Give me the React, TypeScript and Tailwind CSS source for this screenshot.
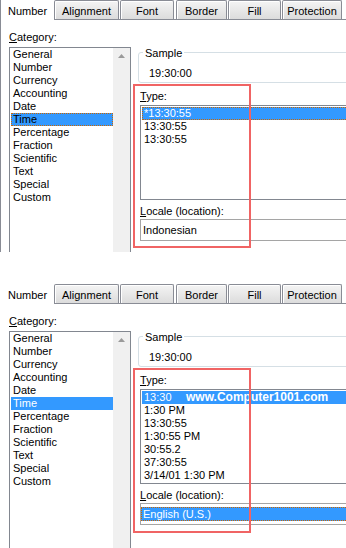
import React from 'react';

const tabs = [
  { label: 'Alignment', cls: 'w-[65px]' },
  { label: 'Font', cls: 'w-[54px] ml-[1px]' },
  { label: 'Border', cls: 'w-[51px] ml-[2px]' },
  { label: 'Fill', cls: 'w-[53px] ml-[1px]' },
  { label: 'Protection', cls: 'w-[60px] ml-[1px]' },
];

const categories = [
  'General',
  'Number',
  'Currency',
  'Accounting',
  'Date',
  'Time',
  'Percentage',
  'Fraction',
  'Scientific',
  'Text',
  'Special',
  'Custom',
];

function Tabs() {
  return (
    <div className="flex h-[20px] shrink-0">
      <div className="w-[54px] shrink-0 pl-[8px] pt-[5px] leading-[13px]">Number</div>
      <div className="flex flex-1 border-b border-[#898c95]">
        {tabs.map((t) => (
          <div
            key={t.label}
            className={`${t.cls} shrink-0 h-[19px] border-t border-x border-[#898c95] rounded-t-[2px] bg-gradient-to-b from-[#f4f4f4] to-[#dcdcdc] shadow-[inset_1px_1px_0_#ffffff] pt-[4px] leading-[13px] text-center`}
          >
            {t.label}
          </div>
        ))}
      </div>
    </div>
  );
}

function UpArrow() {
  return (
    <svg width="7" height="4" viewBox="0 0 7 4">
      <polygon points="0,4 3.5,0 7,4" fill="#9a9a9a" />
    </svg>
  );
}

function Panel({ bottom }: { bottom?: boolean }) {
  const typeItems = bottom
    ? ['13:30', '1:30 PM', '13:30:55', '1:30:55 PM', '30:55.2', '37:30:55', '3/14/01 1:30 PM']
    : ['*13:30:55', '13:30:55', '13:30:55'];
  return (
    <div
      className={`relative flex flex-col overflow-hidden shrink-0 ${
        bottom ? 'h-[264px] mt-[32px]' : 'h-[252px] shadow-[inset_1px_0_0_#898c95]'
      }`}
    >
      <Tabs />
      <div className="flex flex-1 min-h-0">
        {/* Category column */}
        <div className="w-[131px] shrink-0 pl-[9px] flex flex-col">
          <div className="mt-[11px] h-[13px] leading-[13px]">
            <span className="underline underline-offset-[1px]">C</span>ategory:
          </div>
          <div className="mt-[3px] w-[122px] h-[320px] shrink-0 border border-[#828790] flex">
            <div className="w-[103px] pl-[1px]">
              {categories.map((c) => (
                <div
                  key={c}
                  className={`h-[13px] leading-[13px] pl-[2px] whitespace-nowrap ${
                    c === 'Time'
                      ? bottom
                        ? 'bg-[#3399ff] text-white'
                        : 'bg-[#3399ff] outline-1 outline-dotted -outline-offset-1 outline-[#cc6600]'
                      : ''
                  }`}
                >
                  {c}
                </div>
              ))}
            </div>
            <div className="w-[17px] bg-[#f0f0f0] flex justify-center pt-[6px]">
              <div className="h-[4px] flex">
                <UpArrow />
              </div>
            </div>
          </div>
        </div>

        {/* Right column */}
        <div className="w-[230px] shrink-0 pl-[7px] flex flex-col">
          <div className="relative mt-[32px] h-[31px] shrink-0 border border-[#d5dfe5] rounded-[3px]">
            <span className="absolute left-[4px] top-[-6px] bg-white px-[2px] leading-[13px]">Sample</span>
            <div className="pl-[10px] pt-[14px] leading-[13px]">19:30:00</div>
          </div>

          <div className="ml-[2px] flex flex-col">
            <div className="mt-[7px] h-[13px] leading-[13px]">
              <span className="underline underline-offset-[1px]">T</span>ype:
            </div>
            <div className="mt-[2px] h-[95px] border border-[#828790] pt-[1px] pl-[1px]">
              {typeItems.map((t, i) => (
                <div
                  key={i}
                  className={`relative h-[13px] leading-[13px] pl-[2px] whitespace-nowrap ${
                    i === 0
                      ? bottom
                        ? 'bg-[#3399ff] text-white'
                        : 'bg-[#3399ff] text-white outline-1 outline-dotted -outline-offset-1 outline-[#cc6600]'
                      : ''
                  }`}
                >
                  {t}
                  {bottom && i === 0 ? (
                    <span className="absolute left-[44px] top-0 text-[12px] font-bold leading-[13px] text-white">
                      www.Computer1001.com
                    </span>
                  ) : null}
                </div>
              ))}
            </div>
            <div className="mt-[5px] h-[13px] leading-[13px]">
              <span className="underline underline-offset-[1px]">L</span>ocale (location):
            </div>
            <div className="mt-[1px] h-[22px] border border-[#a5a5a5] flex items-center">
              {bottom ? (
                <div className="w-full h-[14px] leading-[14px] pl-[2px] bg-[#3399ff] text-white outline-1 outline-dotted -outline-offset-1 outline-[#cc6600]">
                  English (U.S.)
                </div>
              ) : (
                <div className="pl-[2px] leading-[13px]">Indonesian</div>
              )}
            </div>
          </div>
        </div>
      </div>

      <div
        className={`absolute left-[133px] top-[84px] w-[118px] border-2 border-[#f06464] pointer-events-none ${
          bottom ? 'h-[165px]' : 'h-[164px]'
        }`}
      />
    </div>
  );
}

export default function App() {
  return (
    <div className="w-[346px] h-[548px] overflow-hidden bg-white text-black text-[11px] font-['Liberation_Sans',Arial,sans-serif] flex flex-col">
      <Panel />
      <Panel bottom />
    </div>
  );
}
